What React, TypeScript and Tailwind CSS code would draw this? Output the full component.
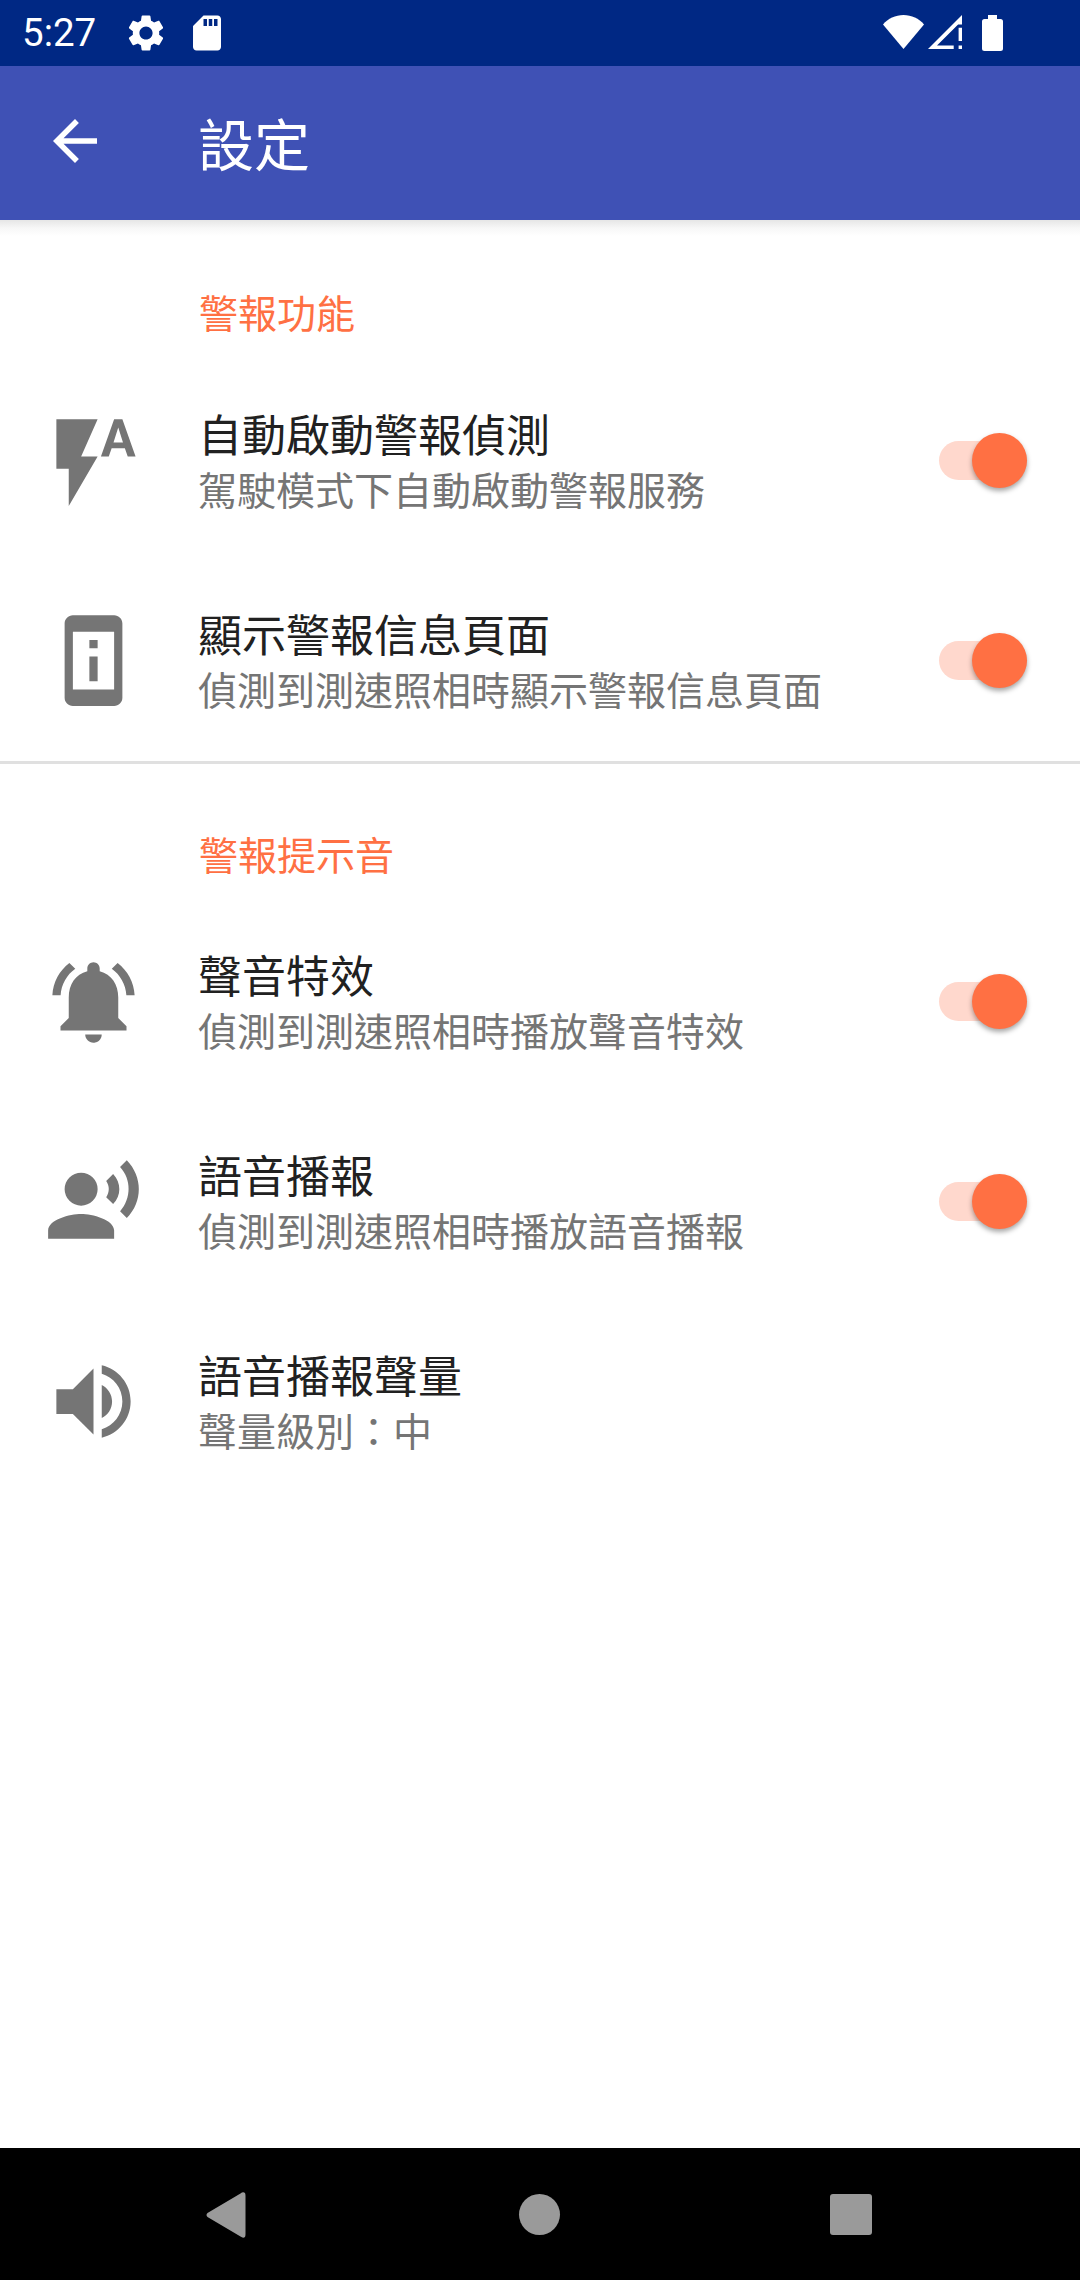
const ICON = "#757575";

const Icon = ({ d }: { d: string }) => (
  <svg viewBox="0 0 24 24" className="w-[99px] h-[99px] shrink-0" fill={ICON}>
    <path d={d} />
  </svg>
);

const flash = "M3 2v12h3v9l7-12H9l4-9H3zm16 0h-2l-3.2 9h1.9l.7-2h3.2l.7 2h1.9L19 2zm-2.15 5.65L18 4l1.15 3.65h-2.3z";
const device = "M13 7h-2v2h2V7zm0 4h-2v6h2v-6zm4-9.99L7 1c-1.1 0-2 .9-2 2v18c0 1.1.9 2 2 2h10c1.1 0 2-.9 2-2V3c0-1.1-.9-1.99-2-1.99zM17 19H7V5h10v14z";
const bell = "M7.58 4.08L6.15 2.65C3.75 4.48 2.17 7.3 2.03 10.5h2c.15-2.65 1.51-4.97 3.55-6.42zm12.39 6.42h2c-.15-3.2-1.73-6.02-4.12-7.85l-1.42 1.43c2.02 1.45 3.39 3.77 3.54 6.42zM18 11c0-3.07-1.64-5.64-4.5-6.32V4c0-.83-.67-1.5-1.5-1.5s-1.5.67-1.5 1.5v.68C7.63 5.36 6 7.92 6 11v5l-2 2v1h16v-1l-2-2v-5zm-6 11c.14 0 .27-.01.4-.04.65-.14 1.18-.58 1.44-1.18.1-.24.15-.5.15-.78h-4c.01 1.1.9 2 2.01 2z";
const voice = "M5 9a4 4 0 1 0 8 0a4 4 0 1 0-8 0zM9 15c-2.67 0-8 1.34-8 4v2h16v-2c0-2.66-5.33-4-8-4zm7.76-9.64l-1.68 1.69c.84 1.18.84 2.71 0 3.89l1.68 1.69c2.02-2.02 2.02-5.07 0-7.27zM20.07 2l-1.63 1.63c2.77 3.02 2.77 7.56 0 10.74L20.07 16c3.9-3.89 3.91-9.95 0-14z";
const volume = "M3 9v6h4l5 5V4L7 9H3zm13.5 3c0-1.77-1.02-3.29-2.5-4.03v8.05c1.48-.73 2.5-2.25 2.5-4.02zM14 3.23v2.06c2.89.86 5 3.54 5 6.71s-2.11 5.85-5 6.71v2.06c4.01-.91 7-4.49 7-8.77 0-4.28-2.99-7.86-7-8.77z";
const gear = "M19.14,12.94c0.04-0.3,0.06-0.61,0.06-0.94c0-0.32-0.02-0.64-0.07-0.94l2.03-1.58c0.18-0.14,0.23-0.41,0.12-0.61l-1.92-3.32c-0.12-0.22-0.37-0.29-0.59-0.22l-2.39,0.96c-0.5-0.38-1.03-0.7-1.62-0.94L14.4,2.81c-0.04-0.24-0.24-0.41-0.48-0.41h-3.84c-0.24,0-0.43,0.17-0.47,0.41L9.25,5.35C8.66,5.59,8.12,5.92,7.63,6.29L5.24,5.33c-0.22-0.08-0.47,0-0.59,0.22L2.74,8.87C2.62,9.08,2.66,9.34,2.86,9.48l2.03,1.58C4.84,11.36,4.8,11.69,4.8,12s0.02,0.64,0.07,0.94l-2.03,1.58c-0.18,0.14-0.23,0.41-0.12,0.61l1.92,3.32c0.12,0.22,0.37,0.29,0.59,0.22l2.39-0.96c0.5,0.38,1.03,0.7,1.62,0.94l0.36,2.54c0.05,0.24,0.24,0.41,0.48,0.41h3.84c0.24,0,0.44-0.17,0.47-0.41l0.36-2.54c0.59-0.24,1.13-0.56,1.62-0.94l2.39,0.96c0.22,0.08,0.47,0,0.59-0.22l1.92-3.32c0.12-0.22,0.07-0.47-0.12-0.61L19.14,12.94z M12,15.6c-1.98,0-3.6-1.62-3.6-3.6s1.62-3.6,3.6-3.6s3.6,1.62,3.6,3.6S13.98,15.6,12,15.6z";
const sd = "M18 2h-8L4.02 8 4 20c0 1.1.9 2 2 2h12c1.1 0 2-.9 2-2V4c0-1.1-.9-2-2-2zm-6 6h-2V4h2v4zm3 0h-2V4h2v4zm3 0h-2V4h2v4z";

const Toggle = () => (
  <div className="relative w-[88px] h-[39px] rounded-full bg-[#ffd8cd] shrink-0">
    <div className="absolute right-0 top-[-8px] w-[55px] h-[55px] rounded-full bg-[#ff7043] shadow-[0_3px_5px_rgba(0,0,0,0.35)]" />
  </div>
);

const Row = ({ icon, title, sub, toggle = true }: { icon: string; title: string; sub: string; toggle?: boolean }) => (
  <div className="flex items-center h-[200px] pt-[1px] pl-[44px] pr-[53px]">
    <Icon d={icon} />
    <div className="ml-[55px] flex-1 flex flex-col pb-[4px]">
      <div className="text-[44px] leading-[58px] text-[#212121]">{title}</div>
      <div className="text-[39px] leading-[52px] text-[#757575]">{sub}</div>
    </div>
    {toggle && <Toggle />}
  </div>
);

export default function App() {
  return (
    <div className="w-[1080px] h-[2280px] flex flex-col bg-white overflow-hidden font-['Noto_Sans_CJK_TC','Noto_Sans_CJK_SC',sans-serif]">
      <div className="h-[66px] shrink-0 bg-[#002884] flex items-center text-white">
        <span className="ml-[22px] w-[102px] text-[38.5px] leading-[46px] font-['Roboto',sans-serif]">5:27</span>
        <svg viewBox="0 0 24 24" className="w-[44px] h-[44px]" fill="white"><path d={gear} /></svg>
        <svg viewBox="0 0 24 24" className="w-[42px] h-[42px] ml-[18px]" fill="white"><path d={sd} /></svg>
        <div className="flex-1" />
        <svg viewBox="0 0 41 34" className="w-[41px] h-[34px] mt-[-2px]" fill="white">
          <path d="M0 9.5C5 3.5 12.5 0 20.5 0S36 3.5 41 9.5L20.5 34z" />
        </svg>
        <svg viewBox="0 0 34 34" className="w-[34px] h-[34px] ml-[4px] mt-[-2px]" fill="white">
          <path d="M0 34L34 0V9.500H30.100L9 30.600H25.700V34z" />
          <path d="M30.600 12.700H34V26H30.600zM30.600 30.600H34V34H30.600z" />
        </svg>
        <svg viewBox="0 0 21 36" className="w-[21px] h-[36px] ml-[20px] mr-[77px]" fill="white">
          <path d="M6 0h9v4h3.500A2.500 2.500 0 0 1 21 6.500V33.500A2.500 2.500 0 0 1 18.500 36H2.500A2.500 2.500 0 0 1 0 33.500V6.500A2.500 2.500 0 0 1 2.500 4H6z" />
        </svg>
      </div>
      <div className="relative h-[154px] shrink-0 bg-[#3f51b5] flex items-center text-white">
        <svg viewBox="0 0 24 24" className="w-[66px] h-[66px] ml-[42px] mt-[-4px]" fill="white">
          <path d="M20 11H7.830l5.590-5.590L12 4l-8 8 8 8 1.410-1.410L7.830 13H20v-2z" />
        </svg>
        <span className="ml-[90px] text-[56px] leading-[70px] mt-[-3px]">設定</span>
        <div className="absolute left-0 right-0 top-full h-[16px] bg-gradient-to-b from-[#e6e6e6] via-[#f7f7f7] to-white" />
      </div>
      <div className="flex-1">
        <div className="h-[140px] pl-[199px] pt-[66px] text-[39px] leading-[50px] text-[#ff7043]">警報功能</div>
        <Row icon={flash} title="自動啟動警報偵測" sub="駕駛模式下自動啟動警報服務" />
        <Row icon={device} title="顯示警報信息頁面" sub="偵測到測速照相時顯示警報信息頁面" />
        <div className="h-[3px] mt-[1px] bg-[#e0e0e0]" />
        <div className="h-[137px] pl-[199px] pt-[64px] text-[39px] leading-[50px] text-[#ff7043]">警報提示音</div>
        <Row icon={bell} title="聲音特效" sub="偵測到測速照相時播放聲音特效" />
        <Row icon={voice} title="語音播報" sub="偵測到測速照相時播放語音播報" />
        <Row icon={volume} title="語音播報聲量" sub="聲量級別：中" toggle={false} />
      </div>
      <div className="h-[132px] shrink-0 bg-black flex items-start pt-[44px] pl-[206px]">
        <svg viewBox="0 0 40 46" className="w-[40px] h-[46px]" fill="#9a9a9a">
          <path d="M34.500 1.500Q37 -0.500 39 1Q39.500 2 39.500 4V42Q39.500 44 39 45Q37 46.500 34.500 44.500L1.500 25Q-0.500 23 1.500 21z" />
        </svg>
        <div className="ml-[273px] mt-[2px] w-[41px] h-[41px] rounded-full bg-[#9a9a9a]" />
        <div className="ml-[270px] mt-[2px] w-[42px] h-[41px] rounded-[3px] bg-[#9a9a9a]" />
      </div>
    </div>
  );
}
